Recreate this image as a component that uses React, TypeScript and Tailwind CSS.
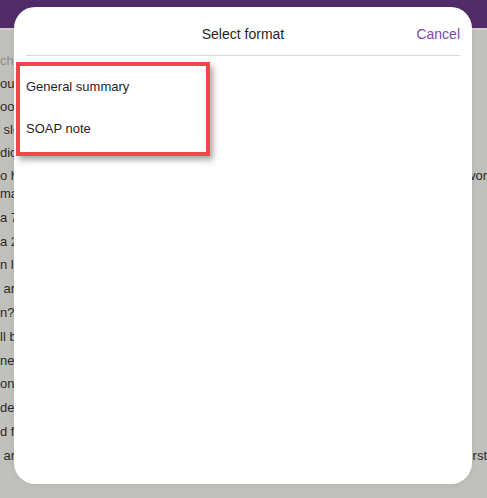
import React from "react";

type Row = { left: string; right?: string; extra?: string; muted?: boolean };

const upperRows: Row[] = [
  { left: "ch", muted: true },
  { left: "ou" },
  { left: "oot" },
  { left: " sle" },
  { left: "dic" },
  { left: "o h", right: "wor", extra: "mag" },
];

const lowerRows: Row[] = [
  { left: "a 7" },
  { left: "a 2" },
  { left: "n l" },
  { left: " ar" },
  { left: "n?" },
  { left: "ll b" },
  { left: "ne" },
  { left: "on" },
  { left: "de" },
  { left: "d f" },
  { left: " ar", right: "rst" },
];

function ListRow({ r }: { r: Row }) {
  return (
    <div className="flex flex-col">
      <div className="flex justify-between whitespace-pre">
        <span className={r.muted ? "text-[#8d8e8a]" : ""}>{r.left}</span>
        {r.right && <span>{r.right}</span>}
      </div>
      {r.extra && <span>{r.extra}</span>}
    </div>
  );
}

function BackgroundList() {
  return (
    <div className="flex flex-col gap-[5.8px] pt-[22px] text-[13px] leading-[18px] text-[#2a2a2a]">
      <div className="flex flex-col gap-[5px]">
        {upperRows.map((r, i) => (
          <ListRow key={i} r={r} />
        ))}
      </div>
      {lowerRows.map((r, i) => (
        <ListRow key={i} r={r} />
      ))}
    </div>
  );
}

export default function App() {
  return (
    <div
      className="relative w-[487px] h-[498px] overflow-hidden bg-[#c0c1bc]"
      style={{ fontFamily: '"Liberation Sans", Arial, sans-serif' }}
    >
      <div className="h-[28px] bg-[#522c69]" />
      <div className="h-[2px] bg-[#cfd0cc]" />
      <BackgroundList />

      {/* format picker sheet */}
      <div className="absolute left-[14px] top-[7px] w-[458px] h-[477px] rounded-[21px] bg-white shadow-[0_0_6px_rgba(0,0,0,0.08)] flex flex-col px-[12px]">
        <div className="grid grid-cols-[1fr_auto_1fr] items-center pt-[18px] pb-[12px] leading-[18px]">
          <span />
          <span className="text-[14px] text-[#1f1f1f]">Select format</span>
          <button className="justify-self-end text-[14px] text-[#7b4aa4]">Cancel</button>
        </div>
        <div className="h-px bg-[#d9d9d9]" />
        <div className="-ml-[10px] mt-[6px] w-[194px] border-[4px] border-[#f2454a] shadow-[3px_4px_6px_rgba(0,0,0,0.35)] pb-[2px] text-[13px] text-[#1f1f1f]">
          <div className="h-[42px] flex items-center pl-[6px]">General summary</div>
          <div className="h-[42px] flex items-center pl-[6px]">SOAP note</div>
        </div>
      </div>
    </div>
  );
}
